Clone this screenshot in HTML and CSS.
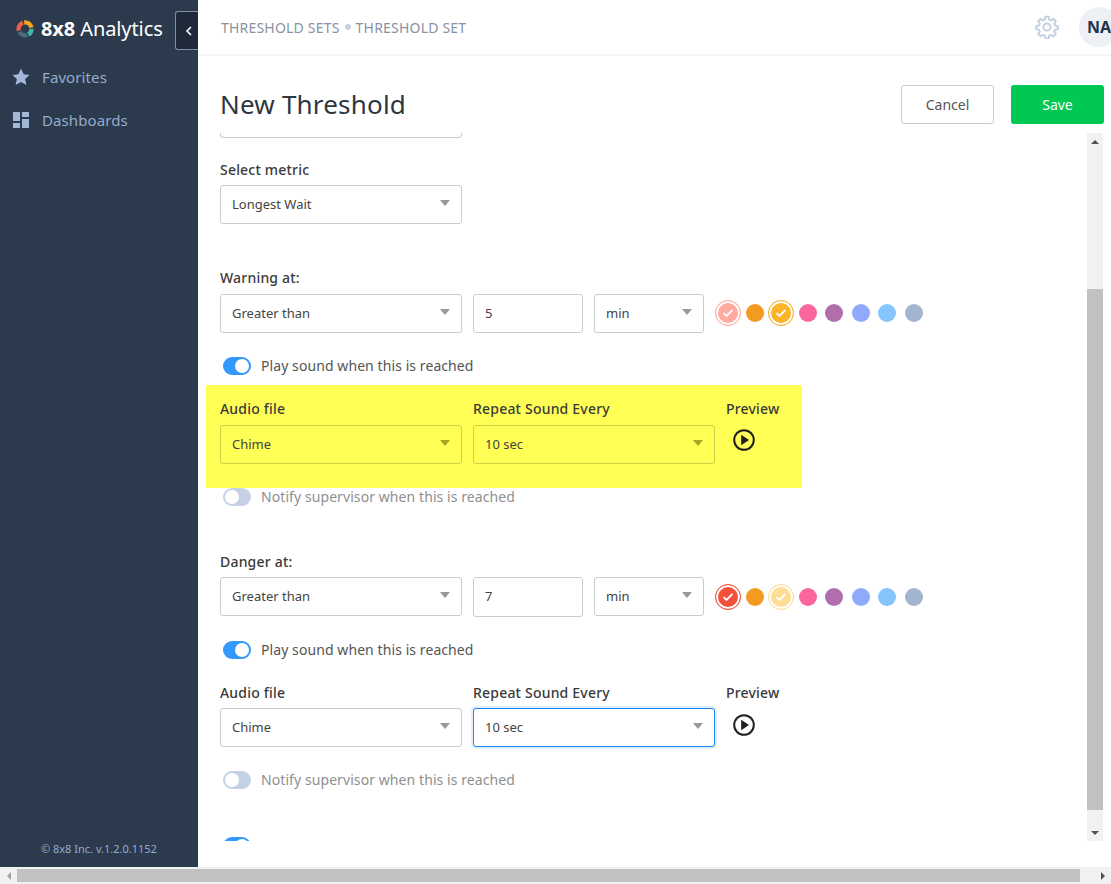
FILE: index.html
```html
<!DOCTYPE html>
<html>
<head>
  <title>New Threshold</title>
  <link rel="stylesheet" href="styles.css">
</head>
<body>

<div class="app">
  <!-- Sidebar -->
  <div class="sidebar">
    <div class="brand">
      <svg class="logo" width="18" height="18" viewBox="0 0 18 18" fill="none" stroke-width="4.4">
        <path d="M2.9 10.6A6.5 6.5 0 0 1 7 2.8" stroke="#e8604c"/>
        <path d="M8.2 2.5A6.5 6.5 0 0 1 15.4 7.6" stroke="#f5a623"/>
        <path d="M15.5 8.8A6.5 6.5 0 0 1 12.4 14.5" stroke="#3fb8a8"/>
        <path d="M11.4 15A6.5 6.5 0 0 1 3.6 12" stroke="#4d6b78"/>
      </svg>
      <span class="brand-name"><b>8x8</b> Analytics</span>
      <button class="collapse">
        <svg width="8" height="12" viewBox="0 0 8 12" fill="none" stroke="#fff" stroke-width="1.6"><path d="M6 2 2 6l4 4"/></svg>
      </button>
    </div>
    <div class="nav-item">
      <svg width="18" height="18" viewBox="0 0 18 18" fill="#a3b8d9"><path d="M9 .6l2.6 5.6 6 .7-4.5 4.1 1.3 6L9 14.1 3.600 17l1.300-6L.4 6.900l6-.7z"/></svg>
      <span>Favorites</span>
    </div>
    <div class="nav-item">
      <svg width="18" height="18" viewBox="0 0 18 18" fill="#a3b8d9"><path d="M1 1h7v9H1zM10 1h7v5h-7zM10 8h7v9h-7zM1 12h7v5H1z"/></svg>
      <span>Dashboards</span>
    </div>
    <div class="copyright">© 8x8 Inc. v.1.2.0.1152</div>
  </div>

  <div class="main">
    <!-- Top bar -->
    <div class="topbar">
      <div class="crumbs">THRESHOLD SETS<i></i>THRESHOLD SET</div>
      <svg class="gear" width="24" height="24" viewBox="0 0 24 24" fill="none" stroke="#c5d0e2" stroke-width="2" stroke-linejoin="round">
        <circle cx="12" cy="12" r="3.6"/>
        <path d="M10.300 1.800h3.400l.5 2.800 1.900.8 2.300-1.600 2.400 2.400-1.600 2.300.8 1.900 2.800.5v3.400l-2.800.5-.8 1.900 1.600 2.300-2.400 2.400-2.300-1.600-1.900.8-.5 2.800h-3.400l-.5-2.800-1.900-.8-2.300 1.600-2.400-2.400 1.600-2.300-.8-1.900-2.800-.5v-3.400l2.800-.5.8-1.900-1.600-2.300 2.400-2.400 2.300 1.600 1.900-.8z"/>
      </svg>
      <div class="avatar">NA</div>
    </div>

    <!-- Page title -->
    <div class="head">
      <h1>New Threshold</h1>
      <button class="btn cancel">Cancel</button>
      <button class="btn save">Save</button>
    </div>

    <!-- Form -->
    <div class="body">
      <div class="pane">
        <div class="cut-select"></div>

        <div class="label metric-label">Select metric</div>
        <div class="select wide">Longest Wait</div>

        <div class="label level-label">Warning at:</div>
        <div class="row">
          <div class="select wide">Greater than</div>
          <div class="input">5</div>
          <div class="select unit">min</div>
          <div class="swatches">
            <span class="dot ring faded-red"><svg width="12" height="10" viewBox="0 0 12 10" fill="none" stroke="#fff" stroke-width="1.800"><path d="M1.500 5.200 4.500 8 10.500 1.800"/></svg></span>
            <span class="dot orange"></span>
            <span class="dot ring yellow"><svg width="12" height="10" viewBox="0 0 12 10" fill="none" stroke="#fff" stroke-width="1.800"><path d="M1.500 5.200 4.500 8 10.500 1.800"/></svg></span>
            <span class="dot pink"></span>
            <span class="dot purple"></span>
            <span class="dot periwinkle"></span>
            <span class="dot sky"></span>
            <span class="dot slate"></span>
          </div>
        </div>

        <div class="toggle-row first">
          <span class="toggle on"></span>Play sound when this is reached
        </div>

        <div class="sound highlight">
          <div class="field">
            <div class="label">Audio file</div>
            <div class="select wide">Chime</div>
          </div>
          <div class="field">
            <div class="label">Repeat Sound Every</div>
            <div class="select wide">10 sec</div>
          </div>
          <div class="field">
            <div class="label">Preview</div>
            <svg class="play" width="24" height="24" viewBox="0 0 24 24"><circle cx="12" cy="12" r="9.800" fill="none" stroke="#1f1f1f" stroke-width="2"/><path d="M9.200 6.800 17 12l-7.800 5.200z" fill="#1f1f1f"/></svg>
          </div>
        </div>

        <div class="toggle-row off-row">
          <span class="toggle"></span>Notify supervisor when this is reached
        </div>

        <div class="label level-label danger">Danger at:</div>
        <div class="row">
          <div class="select wide">Greater than</div>
          <div class="input tall">7</div>
          <div class="select unit">min</div>
          <div class="swatches low">
            <span class="dot ring red"><svg width="12" height="10" viewBox="0 0 12 10" fill="none" stroke="#fff" stroke-width="1.800"><path d="M1.500 5.200 4.500 8 10.500 1.800"/></svg></span>
            <span class="dot orange"></span>
            <span class="dot ring faded-yellow"><svg width="12" height="10" viewBox="0 0 12 10" fill="none" stroke="#fff" stroke-width="1.800"><path d="M1.500 5.200 4.500 8 10.500 1.800"/></svg></span>
            <span class="dot pink"></span>
            <span class="dot purple"></span>
            <span class="dot periwinkle"></span>
            <span class="dot sky"></span>
            <span class="dot slate"></span>
          </div>
        </div>

        <div class="toggle-row first">
          <span class="toggle on"></span>Play sound when this is reached
        </div>

        <div class="sound">
          <div class="field">
            <div class="label">Audio file</div>
            <div class="select wide">Chime</div>
          </div>
          <div class="field">
            <div class="label">Repeat Sound Every</div>
            <div class="select wide focus">10 sec</div>
          </div>
          <div class="field">
            <div class="label">Preview</div>
            <svg class="play" width="24" height="24" viewBox="0 0 24 24"><circle cx="12" cy="12" r="9.800" fill="none" stroke="#1f1f1f" stroke-width="2"/><path d="M9.200 6.800 17 12l-7.800 5.200z" fill="#1f1f1f"/></svg>
          </div>
        </div>

        <div class="toggle-row off-row">
          <span class="toggle"></span>Notify supervisor when this is reached
        </div>

        <div class="toggle-row last">
          <span class="toggle on"></span>
        </div>
      </div>

      <!-- Vertical scrollbar -->
      <div class="vbar">
        <div class="arrow"><span class="tri up"></span></div>
        <div class="vthumb"></div>
        <div class="arrow"><span class="tri down"></span></div>
      </div>
    </div>
  </div>
</div>

<!-- Horizontal scrollbar -->
<div class="hbar">
  <div class="harrow"><span class="tri left"></span></div>
  <div class="hthumb"></div>
  <div class="harrow"><span class="tri right"></span></div>
</div>

</body>
</html>
```

FILE: styles.css
```css
* { box-sizing: border-box; }
html, body { margin: 0; height: 884px; overflow: hidden; }
body { font-family: "Noto Sans", "Open Sans", sans-serif; font-size: 14px; color: #333; background: #fff; }

.app { display: flex; height: 867px; }

/* Sidebar */
.sidebar { width: 198px; flex-shrink: 0; background: #2b3a4c; display: flex; flex-direction: column; }
.brand { display: flex; align-items: center; height: 39px; margin: 11px 0 5px; padding-left: 16px; }
.logo { flex-shrink: 0; margin-bottom: 4px; }
.brand-name { margin: 0 0 4px 7px; font-size: 20px; color: #fff; letter-spacing: -.1px; white-space: nowrap; }
.brand-name b { font-weight: 700; }
.collapse { margin-left: auto; width: 23px; height: 39px; padding: 0 0 0 4px; background: #1e2a3a; border: 1px solid #7f8ea3; border-right: 0; border-radius: 3px 0 0 3px; display: flex; align-items: center; justify-content: center; }
.nav-item { display: flex; align-items: center; height: 43px; padding-left: 12px; color: #96abcd; font-size: 15px; letter-spacing: .1px; }
.nav-item span { margin-left: 12px; }
.copyright { margin-top: auto; padding: 0 0 11px 41px; font-size: 11px; color: #96abcd; }

/* Top bar */
.main { flex: 1; min-width: 0; display: flex; flex-direction: column; }
.topbar { height: 56px; flex-shrink: 0; display: flex; align-items: center; padding-left: 23px; border-bottom: 2px solid #f4f5f6; overflow: hidden; }
.crumbs { font-size: 14px; letter-spacing: .2px; color: #8792a2; flex: 1; display: flex; align-items: center; }
.crumbs i { width: 6px; height: 6px; border-radius: 50%; background: #c5d0e0; margin: 0 5px; }
.gear { margin-right: 20px; flex-shrink: 0; }
.avatar { width: 40px; height: 40px; flex-shrink: 0; border-radius: 50%; background: #edf0f4; margin-right: -8px; padding-left: 8px; line-height: 40px; font-size: 16px; font-weight: 700; color: #1f3650; }

/* Page title */
.head { height: 77px; flex-shrink: 0; display: flex; align-items: center; padding: 19px 7px 0 22px; }
.head h1 { flex: 1; margin: 0; font-size: 26px; font-weight: 400; color: #2e3640; letter-spacing: .2px; }
.btn { height: 39px; border-radius: 3px; font: inherit; font-size: 14px; }
.cancel { width: 93px; background: #fff; border: 1px solid #ccc; color: #555; margin-right: 17px; }
.save { width: 93px; background: #00c853; border: 0; color: #fff; }

/* Form */
.body { flex: 1; min-height: 0; display: flex; padding-right: 8px; }
.pane { flex: 1; min-width: 0; height: 708px; padding-left: 22px; overflow: hidden; }
.cut-select { width: 242px; height: 5px; border: 1px solid #ccc; border-top: 0; border-radius: 0 0 4px 4px; }
.label { font-size: 14px; font-weight: 500; line-height: 20px; letter-spacing: .2px; color: #3a3a3a; }
.metric-label { margin-top: 22px; margin-bottom: 5px; }
.level-label { margin-top: 44px; margin-bottom: 6px; }
.level-label.danger { margin-top: 45px; margin-bottom: 5px; }

.row { display: flex; align-items: flex-start; gap: 11px; }
.select, .input { height: 39px; line-height: 37px; border: 1px solid #ccc; border-radius: 3px; padding-left: 11px; font-size: 13px; color: #444; background: #fff; }
.select { position: relative; }
.select::after { content: ""; position: absolute; right: 11px; top: 14px; border-left: 5px solid transparent; border-right: 5px solid transparent; border-top: 6px solid #999; }
.wide { width: 242px; }
.input { width: 110px; }
.input.tall { height: 40px; }
.unit { width: 110px; }

.swatches { display: flex; align-items: center; gap: 2.5px; margin: 6px 0 0 1px; }
.swatches.low { margin-top: 7px; }
.dot { width: 24px; height: 24px; display: flex; align-items: center; justify-content: center; border-radius: 50%; border: 3px solid transparent; background-clip: padding-box; }
.ring { width: 26px; height: 26px; margin: 0 -1px; border: 1px solid transparent; box-shadow: inset 0 0 0 2px #fff; }
.faded-red { background: #ffa9a0; background-clip: border-box; border-color: #ffa9a0; }
.red { background: #f4513b; background-clip: border-box; border-color: #f4513b; }
.yellow { background: #fbb328; background-clip: border-box; border-color: #fbb328; }
.faded-yellow { background: #fddd96; background-clip: border-box; border-color: #fddd96; }
.orange { background-color: #f39a21; }
.pink { background-color: #fb679d; }
.purple { background-color: #b06fac; }
.periwinkle { background-color: #8fa9fb; }
.sky { background-color: #85c4fd; }
.slate { background-color: #a3b4cf; }

.toggle-row { display: flex; align-items: flex-start; font-size: 14px; line-height: 19px; letter-spacing: .08px; color: #555; height: 20px; padding-left: 3px; }
.toggle-row.first { margin-top: 23px; }
.off-row { margin-top: 0; color: #8f8f8f; }
.toggle-row.last { margin-top: 46px; }
.toggle { width: 28px; height: 18px; margin-top: 1px; border-radius: 9px; background: #c4d0e4; margin-right: 10px; position: relative; flex-shrink: 0; }
.toggle::after { content: ""; position: absolute; left: 2px; top: 2px; width: 14px; height: 14px; border-radius: 50%; background: #fff; }
.toggle.on { background: #3399ff; }
.toggle.on::after { left: 12px; }

.sound { display: flex; gap: 11px; margin-top: 23px; margin-bottom: 23px; }
.field .label { margin-bottom: 5px; }
.play { display: block; margin: 10px 0 0 6px; }
.highlight { width: 596px; height: 103px; margin: 9px 0 -1px -14px; padding: 14px 0 0 14px; background: #ffff55; }
.highlight .field .label { margin-bottom: 6px; }
.highlight .play { margin-top: 9px; }
.highlight + .toggle-row { margin-top: 0; }
.highlight .select { background: transparent; border-color: #cfcf4a; }
.highlight .select::after { border-top-color: #a6a61f; }
.focus { border-color: #1a86f5; box-shadow: 0 0 0 2px #e2f0fe; }

/* Scrollbars */
.vbar { width: 16px; height: 708px; flex-shrink: 0; background: #f1f1f1; display: flex; flex-direction: column; }
.arrow { height: 17px; display: flex; align-items: center; justify-content: center; }
.vthumb { height: 521px; margin-top: 139px; margin-bottom: auto; background: #c1c1c1; }
.tri { display: block; width: 0; height: 0; }
.tri.up { border-left: 4px solid transparent; border-right: 4px solid transparent; border-bottom: 4px solid #505050; }
.tri.down { border-left: 4px solid transparent; border-right: 4px solid transparent; border-top: 4px solid #505050; }
.tri.left { border-top: 4px solid transparent; border-bottom: 4px solid transparent; border-right: 4px solid #a3a3a3; }
.tri.right { border-top: 4px solid transparent; border-bottom: 4px solid transparent; border-left: 4px solid #505050; }

.hbar { height: 17px; background: #f1f1f1; display: flex; align-items: center; }
.harrow { width: 17px; flex-shrink: 0; display: flex; justify-content: center; }
.hthumb { width: 1063px; height: 13px; background: #c1c1c1; }
.harrow:last-child { margin-left: auto; }
```
